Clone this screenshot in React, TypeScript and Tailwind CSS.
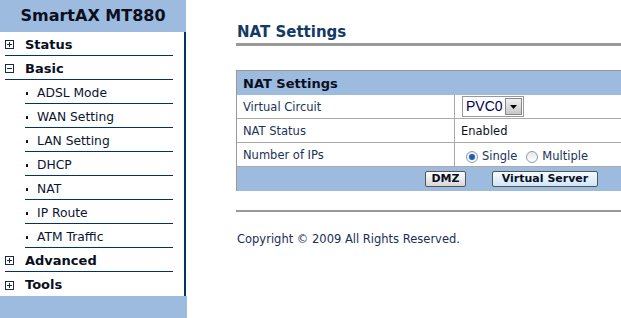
import React from 'react'

const font = {fontFamily: '"DejaVu Sans", Verdana, sans-serif'}

const Box = ({open}:{open:boolean}) => (
  <span className="w-[9px] h-[9px] border border-[#1a2a40] relative inline-block mr-[11px] shrink-0">
    <span className="absolute left-[1px] right-[1px] top-[3px] h-px bg-[#1a2a40]" />
    {!open && <span className="absolute top-[1px] bottom-[1px] left-[3px] w-px bg-[#1a2a40]" />}
  </span>
)

const Top = ({label, open=false, last=false}:{label:string;open?:boolean;last?:boolean}) => (
  <div className={`ml-[5px] w-[168px] h-[24px] flex items-center pt-[2px] text-[13px] font-bold text-[#0a0f1e] ${last?'':'border-b border-[#003366]'}`}>
    <Box open={open} />
    <span>{label}</span>
  </div>
)

const Sub = ({label}:{label:string}) => (
  <div className="ml-[25px] w-[148px] h-[24px] flex items-center pt-[3px] text-[12.3px] text-[#0a1430] border-b border-[#003366]">
    <span className="w-[2px] h-[3px] bg-[#0a1430] ml-px mr-[9px]" />
    <span>{label}</span>
  </div>
)

const Row = ({label, children}:{label:string;children:React.ReactNode}) => (
  <div className="flex h-[24px] border-b border-[#aaa] text-[11.5px]">
    <div className="w-[218px] border-r border-[#aaa] flex items-center pt-[3px] pl-[6px] text-[#1a3358]">{label}</div>
    <div className="flex-1 flex items-center pt-[3px] pl-[6px] text-[#0a0f1e]">{children}</div>
  </div>
)

const Radio = ({on}:{on:boolean}) => (
  <span className="w-[12px] h-[12px] rounded-full border border-[#8a9ab0] bg-gradient-to-b from-[#e8e8e8] to-white flex items-center justify-center mr-[4px]">
    {on && <span className="w-[6px] h-[6px] rounded-full bg-[#1e5fb4]" />}
  </span>
)

export default function App(){
  return(
    <div className="flex w-[621px] h-[318px] overflow-hidden bg-white" style={font}>
      <div className="w-[187px] shrink-0 flex flex-col">
        <div className="h-[32px] bg-[#9dbadf] w-[186px] flex items-center justify-center text-[16px] font-bold text-[#0a0f1e]">SmartAX MT880</div>
        <div className="w-[186px] flex-1 border-r-2 border-[#003366]">
          <Top label="Status" />
          <Top label="Basic" open />
          <Sub label="ADSL Mode" />
          <Sub label="WAN Setting" />
          <Sub label="LAN Setting" />
          <Sub label="DHCP" />
          <Sub label="NAT" />
          <Sub label="IP Route" />
          <Sub label="ATM Traffic" />
          <Top label="Advanced" />
          <Top label="Tools" last />
        </div>
        <div className="h-[22px] bg-[#9dbadf]" />
      </div>

      <div className="flex-1 pl-[49px] overflow-hidden">
        <div className="h-[43px] flex items-end pb-0 pl-px text-[15px] font-bold text-[#123a66]">NAT Settings</div>
        <div className="h-[3px] bg-[#999]" />
        <div className="mt-[24px] w-[420px] border-t border-l border-[#999]">
          <div className="h-[24px] bg-[#9dbadf] flex items-center pt-[1px] pl-[6px] text-[13px] font-bold text-[#0a0f1e]">NAT Settings</div>
          <Row label="Virtual Circuit">
            <div className="ml-[1px] -mt-[3px] h-[21px] w-[62px] border border-[#999] flex items-center bg-white">
              <span className="flex-1 pl-[3px] text-[14px] text-[#000050]" style={{fontFamily:'"Liberation Sans", Arial, sans-serif'}}>PVC0</span>
              <span className="w-[17px] h-[17px] mr-px bg-gradient-to-b from-[#f0f0f0] to-[#c8c8c8] border border-[#888] flex items-center justify-center">
                <svg width="7" height="4" viewBox="0 0 7 4"><path d="M0 0h7L3.5 4z" fill="#000" /></svg>
              </span>
            </div>
          </Row>
          <Row label="NAT Status"><span>Enabled</span></Row>
          <Row label="Number of IPs">
            <div className="flex items-center pt-[1px] ml-[5px] text-[#1a3358]">
              <Radio on /><span className="mr-[9px]">Single</span>
              <Radio on={false} /><span>Multiple</span>
            </div>
          </Row>
          <div className="h-[24px] bg-[#9dbadf] flex items-center text-[11px] font-bold">
            <span className="ml-[188px] w-[41px] h-[16px] flex items-center justify-center border border-[#555] rounded-[2px] bg-gradient-to-b from-white to-[#d8d8d8] text-[#0a0f1e]">DMZ</span>
            <span className="ml-[26px] w-[106px] h-[16px] flex items-center justify-center border border-[#555] rounded-[2px] bg-gradient-to-b from-[#f4fbff] to-[#cfe6f7] text-[#0a0f1e]">Virtual Server</span>
          </div>
        </div>
        <div className="mt-[19px] h-[2px] bg-[#999]" />
        <div className="mt-[19px] text-[11.5px] text-[#1a2d55] pl-px">Copyright © 2009 All Rights Reserved.</div>
      </div>
    </div>
  )
}
